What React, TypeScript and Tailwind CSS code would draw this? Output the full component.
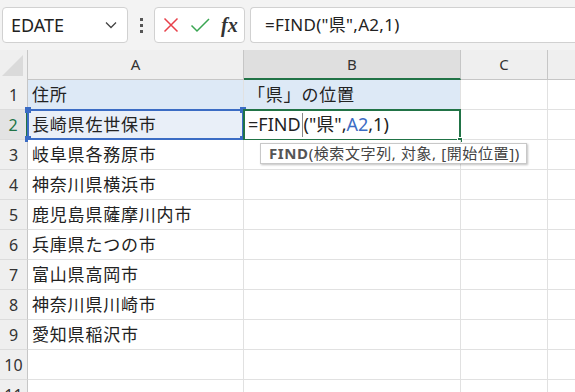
import React from "react";

const FONT = { fontFamily: '"Noto Sans", "Noto Sans CJK JP", sans-serif' };

const rows: string[] = [
  "住所",
  "長崎県佐世保市",
  "岐阜県各務原市",
  "神奈川県横浜市",
  "鹿児島県薩摩川内市",
  "兵庫県たつの市",
  "富山県高岡市",
  "神奈川県川崎市",
  "愛知県稲沢市",
  "",
  "",
];

function Corner({ className }: { className: string }) {
  return <div className={`absolute h-[6px] w-[6px] ${className}`} />;
}

function Toolbar() {
  return (
    <div className="flex h-[50px] items-start gap-[5px] bg-[#f3f3f3] pl-[2px] pt-[7px]">
      <div className="flex h-[36px] w-[126px] items-center justify-between rounded-[4px] border border-[#d1d1d1] bg-white pl-[8px] pr-[10px]">
        <span className="text-[18px] text-[#222]">EDATE</span>
        <svg width="12" height="8" viewBox="0 0 12 8">
          <path d="M1 1.5 L6 6.5 L11 1.5" fill="none" stroke="#444" strokeWidth="1.3" />
        </svg>
      </div>
      <div className="flex h-[36px] w-[16px] flex-col items-center justify-center gap-[3px]">
        <div className="h-[3px] w-[3px] bg-[#555]" />
        <div className="h-[3px] w-[3px] bg-[#555]" />
        <div className="h-[3px] w-[3px] bg-[#555]" />
      </div>
      <div className="flex h-[36px] w-[91px] items-center rounded-[4px] border border-[#d1d1d1] bg-white pl-[8px]">
        <svg width="16" height="16" viewBox="0 0 16 16">
          <path d="M1.5 1.5 L14.5 14.5 M14.5 1.5 L1.5 14.5" stroke="#e8404a" strokeWidth="1.5" />
        </svg>
        <svg width="20" height="16" viewBox="0 0 20 16" className="ml-[11px]">
          <path d="M1.5 8.5 L7 14 L19 2" fill="none" stroke="#3aa552" strokeWidth="1.5" />
        </svg>
        <span className="ml-[11px] font-['Liberation_Serif'] text-[20px] italic font-bold text-[#333] leading-none">
          fx
        </span>
      </div>
      <div className="flex h-[36px] flex-1 items-center rounded-l-[4px] border border-r-0 border-[#d1d1d1] bg-white pl-[14px]">
        <span className="text-[17px] tracking-[0.3px] text-[#222]">=FIND("県",A2,1)</span>
      </div>
    </div>
  );
}

function HeaderRow() {
  return (
    <div className="flex h-[30px] bg-[#efefef]">
      <div className="relative w-[28px] border-r border-[#c6c6c6]">
        <svg width="22" height="22" viewBox="0 0 22 22" className="absolute bottom-[3px] right-[3px]">
          <path d="M21 0 L21 21 L0 21 Z" fill="#dadada" />
        </svg>
      </div>
      <div className="flex w-[216px] items-center justify-center border-b border-r border-[#c6c6c6] text-[15px] text-[#333]">
        A
      </div>
      <div className="flex w-[217px] items-center justify-center border-b-2 border-r border-b-[#217346] border-r-[#c6c6c6] bg-[#dfdfdf] text-[15px] text-[#333]">
        B
      </div>
      <div className="flex w-[87px] items-center justify-center border-b border-r border-[#c6c6c6] text-[15px] text-[#333]">
        C
      </div>
      <div className="flex-1 border-b border-[#c6c6c6]" />
    </div>
  );
}

function Row({ n, text }: { n: number; text: string }) {
  const isHeader = n === 1;
  const isActive = n === 2;
  return (
    <div className="flex h-[30px]">
      <div
        className={`flex w-[28px] items-center justify-center border-b border-r text-[16px] ${
          isActive
            ? "border-b-[#dcdcdc] border-r-[#217346] border-r-2 bg-[#e3e3e3] text-[#217346]"
            : "border-b-[#dcdcdc] border-r-[#c6c6c6] bg-[#efefef] text-[#333]"
        }`}
      >
        {n}
      </div>
      <div
        className={`relative flex w-[216px] items-center border-b border-r border-[#e1e1e1] pl-[4px] text-[17px] tracking-[0.8px] text-[#222] ${
          isHeader ? "bg-[#dde9f6]" : isActive ? "bg-[#e9eff8]" : "bg-white"
        }`}
      >
        {text}
        {isActive && (
          <div className="pointer-events-none absolute -top-[1px] -left-[1px] h-[31px] w-[217px] border-2 border-[#3b6cc4]">
            <Corner className="-left-[4px] -top-[4px] bg-[#3b6cc4]" />
            <Corner className="-right-[4px] -top-[4px] bg-[#3b6cc4]" />
            <Corner className="-left-[4px] -bottom-[4px] bg-[#3b6cc4]" />
            <Corner className="-right-[4px] -bottom-[4px] bg-[#3b6cc4]" />
          </div>
        )}
      </div>
      <div
        className={`relative flex w-[217px] items-center border-b border-r border-[#e1e1e1] pl-[4px] text-[17px] text-[#222] ${
          isHeader ? "bg-[#dde9f6]" : "bg-white"
        }`}
      >
        {isHeader && <span className="tracking-[0.8px]">「県」の位置</span>}
        {isActive && (
          <>
            <span className="flex items-center text-[18px]">
              =FIND
              <span className="mx-[1px] inline-block h-[24px] w-[1px] bg-[#888]" />
              ("県",<span className="text-[#3b6cc4]">A2</span>,1)
            </span>
            <div className="pointer-events-none absolute -top-[1px] -left-[1px] h-[32px] w-[218px] border-2 border-[#217346]">
              <Corner className="-right-[4px] -bottom-[4px] border border-white bg-[#217346]" />
            </div>
            <div className="absolute left-[16px] top-[33px] z-10 flex h-[21px] items-center whitespace-nowrap border border-[#c8c8c8] bg-white pl-[8px] pr-[6px] text-[15px] tracking-[0.6px] text-[#444] shadow-[1px_1px_2px_rgba(0,0,0,0.25)]">
              <span className="font-bold text-[#555]">FIND</span>(検索文字列, 対象, [開始位置])
            </div>
          </>
        )}
      </div>
      <div className="w-[87px] border-b border-r border-[#e1e1e1] bg-white" />
      <div className="flex-1 border-b border-[#e1e1e1] bg-white" />
    </div>
  );
}

export default function App() {
  return (
    <div className="h-[392px] w-[575px] overflow-hidden bg-white" style={FONT}>
      <Toolbar />
      <HeaderRow />
      {rows.map((t, i) => (
        <Row key={i} n={i + 1} text={t} />
      ))}
    </div>
  );
}
